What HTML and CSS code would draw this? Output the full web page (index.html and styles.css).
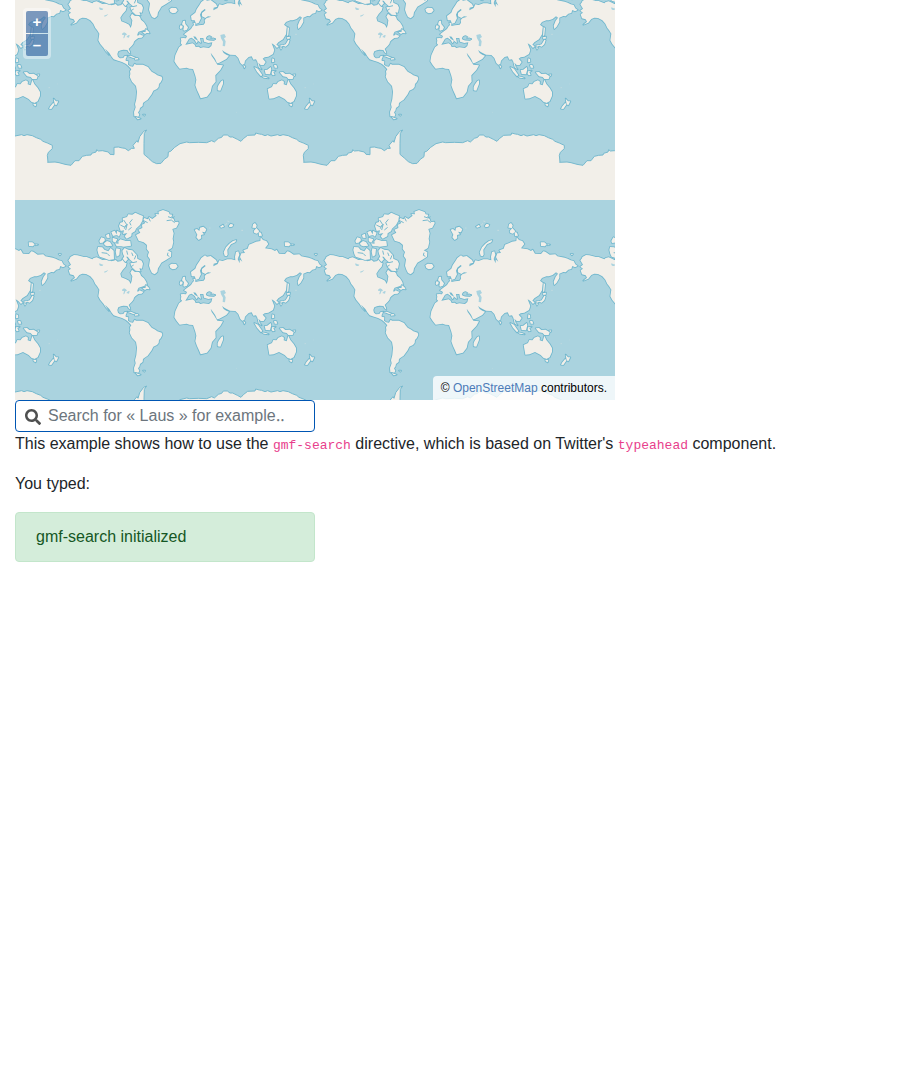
FILE: index.html
```html
<!DOCTYPE html>
<html lang="en">
<head>
<meta charset="utf-8">
<meta name="viewport" content="width=device-width, initial-scale=1">
<title>gmf-search example</title>
<link rel="stylesheet" href="styles.css">
</head>
<body>
<main class="page">
  <section class="map" aria-label="Map">
    <svg class="map-canvas" viewBox="0 -600 1800 1200" preserveAspectRatio="xMinYMin slice" role="img" aria-label="World map">
      <defs>
        <g id="world">
          <g class="land">
            <path d="M160 181L165 175 166 171 177 165 187 166 196 168 207 171 215 171 232 178 236 174 245 172 255 176 262 180 270 179 280 177 290 184 302 180 308 185 319 183 323 176 327 177 330 187 335 190 332 200 323 210 316 221 319 232 332 237 342 242 347 252 350 243 352 229 346 218 351 209 360 216 369 214 375 219 378 227 387 235 394 246 396 254 385 259 371 263 367 271 368 276 374 271 380 274 386 275 380 281 370 282 361 289 357 293 355 300 350 306 341 315 345 323 346 329 341 325 337 318 325 317 318 319 310 322 307 330 309 338 315 343 325 342 329 336 337 335 332 345 332 350 340 352 339 362 346 367 354 368 359 359 363 362 375 362 384 362 399 369 405 377 410 383 421 389 427 394 440 398 442 405 437 415 432 420 431 429 426 435 415 440 410 451 398 467 389 473 384 477 383 486 375 492 373 500 369 505 373 512 370 518 358 517 357 504 362 490 360 481 364 465 366 443 363 426 351 413 344 398 346 390 345 382 349 376 341 367 333 360 321 354 309 350 296 346 290 338 283 327 270 314 276 325 282 333 273 323 266 312 256 300 250 289 253 269 246 258 241 252 235 239 226 229 213 222 202 221 193 225 184 236 169 242 180 233 176 226 165 223 161 211 168 206 160 200 168 194z"/>
            <path d="M363 105L376 98 370 89 382 84 381 74 391 69 384 61 388 54 398 58 402 51 412 57 425 47 421 42 432 43 430 35 444 30 461 36 464 43 472 44 469 51 476 57 479 66 490 65 491 70 484 83 472 87 476 100 473 116 475 126 471 143 466 147 458 151 469 157 468 170 453 180 439 188 433 199 429 205 427 216 419 223 411 219 406 209 402 197 405 178 398 168 402 156 395 147 396 135 386 127 371 122z"/>
            <path d="M312 78L316 68 324 66 323 55 336 51 340 43 352 44 361 38 374 44 384 48 382 62 375 75 363 86 360 94 350 100 349 109 335 116 329 109 337 99 324 102 327 91 317 93z"/>
            <path d="M247 150L249 141 262 142 268 149 280 154 287 144 296 152 297 178 282 180 268 175 254 170 250 162zM302 155L304 145 315 147 313 166 305 170zM322 152L329 144 340 149 352 151 366 166 367 176 380 182 384 191 381 206 373 205 377 214 362 212 350 201 346 190 356 188 345 179 338 170 328 170 324 162zM310 124L316 118 333 123 346 123 348 137 326 140 311 137zM253 123L259 112 268 115 270 121 263 128 255 129zM267 130L276 123 285 126 292 137 277 139 269 136zM273 105L282 101 284 114 275 113zM289 96L299 92 306 105 294 108zM306 92L317 98 312 110 305 104zM293 113L307 118 301 128 293 124zM300 130L311 131 319 138 305 139zM323 176L330 166 339 178 331 186zM463 196L470 191 483 192 488 199 482 206 473 208 466 204zM382 265L392 263 392 255 400 261 404 268 395 267 390 270zM337 336L348 335 362 341 354 342 345 338zM359 343L368 342 371 346 360 347zM362 519L377 524 368 526zM384 512L390 512 388 515z"/>
          </g>
          <g class="inland">
            <path d="M253 190l7 3 5 1-3 4-5 0-4-3zM267 215l6-2 7-3-5 5-6 3zM321 269l6-4 6 3 3 5-5 1-3 8-3 1 2-10-6-1zM334 279l5-5 5-1-2 8z"/>
          </g>
          <g transform="translate(450 0)">
            <g class="land">
              <path d="M47 298L49 290 47 283 55 282 63 283 66 276 57 271 67 263 78 255 83 247 87 243 85 236 91 237 91 246 102 244 116 242 120 236 119 228 125 222 139 218 129 217 121 222 111 217 111 207 122 198 119 195 109 203 105 212 108 223 101 237 93 239 89 229 80 229 78 216 91 206 95 196 103 184 109 174 120 166 126 170 137 168 153 180 157 188 146 191 145 199 158 192 163 181 173 183 187 178 199 178 211 181 210 170 213 156 220 154 223 164 218 177 224 190 224 178 232 185 225 171 229 160 240 159 235 151 248 146 252 134 263 130 273 125 286 123 287 112 294 120 304 123 310 132 300 145 320 148 330 153 335 149 342 161 360 162 367 154 373 155 386 164 403 163 409 169 431 173 440 176 449 181 458 183 463 193 470 198 462 202 454 198 451 207 442 209 434 217 427 216 415 221 415 234 407 248 400 255 398 245 404 230 411 221 405 217 395 225 384 229 376 229 363 234 357 242 366 249 364 269 354 286 340 295 334 302 341 307 336 312 328 303 320 298 322 303 328 318 324 330 310 338 299 340 293 344 302 354 296 363 287 363 280 356 284 368 290 376 281 370 277 353 273 346 265 347 260 337 251 339 240 350 238 360 235 366 226 357 220 342 211 333 195 332 179 324 171 318 176 327 184 332 192 335 184 345 163 356 156 358 150 344 137 326 140 336 147 346 157 362 174 364 166 378 151 394 152 413 141 426 137 444 126 458 107 463 102 451 96 438 91 424 94 407 91 395 88 386 84 375 73 374 65 371 44 374 35 363 28 352 31 334 42 310 51 303 62 302 83 298 89 302 92 309 101 308 106 312 115 310 132 312 139 306 142 295 130 297 117 293 115 282 105 282 108 297 100 291 92 278 85 277 89 284 99 290 95 298 89 288 80 281 72 284 68 291 61 302 52 303z"/>
              <path d="M55 258L57 246 51 241 54 231 60 230 61 240 69 250 66 257 57 260zM44 251L46 244 53 245 52 253 46 255zM89 89L96 87 103 93 105 83 115 80 124 88 120 97 111 95 117 103 108 105 109 115 101 120 94 112 97 104zM165 80L174 74 177 80 168 83zM191 78L197 71 205 74 202 80 194 82zM179 167L176 157 183 142 193 131 204 123 214 120 211 127 198 133 187 149 188 164 185 169zM262 83L264 73 270 69 275 76 273 84zM266 93L274 84 283 94 276 101 268 99zM281 96L288 98 291 107 282 108zM359 127L370 127 377 133 372 139 360 138zM379 133L387 134 381 136zM449 162L456 162 453 166zM368 249L372 252 370 274 366 276zM346 304L355 303 362 301 366 294 370 287 374 289 370 301 362 308 355 305 347 309zM365 280L375 278 374 284 366 284zM345 310L351 311 348 317zM322 343L327 345 328 353 321 355zM327 363L334 363 337 371 329 371zM235 363L241 367 238 373zM268 369L279 374 292 393 288 397 276 383zM291 397L303 399 311 403 296 401zM299 378L307 377 317 369 319 376 315 391 302 390zM321 382L332 380 325 384 329 393 323 394 320 389zM344 385L354 384 361 390 374 389 386 397 383 405 370 405 365 399 354 397zM384 392L391 391 389 396zM308 435L321 429 325 420 334 421 340 413 351 409 357 413 356 421 365 424 370 407 376 420 386 432 393 444 393 456 386 472 376 477 367 473 359 465 342 456 326 463 313 464z"/>
              <path d="M373 479L382 480 380 487 374 484zM434 464L441 472 448 472 442 484 437 481zM433 476L436 482 427 495 420 494 424 487zM161 422L169 411 174 409 174 420 166 440 158 439 158 429z"/>
            </g>
            <path class="lake" d="M124 285L126 278 133 275 140 278 137 283 145 282 153 285 147 289 132 288z"/>
            <path class="inland" d="M166 273L178 270 183 279 177 283 182 292 180 307 173 306 174 293 168 283z"/>
            <path class="specks" d="M187 63l6 2M180 77l5-7M229 91h5M391 271h4M419 431h3M215 505h1M133 84h3M446 420h1"/>
          </g>
          <path class="ice" d="M97 655L120 654 132 656 150 661 168 664 180 650 192 650 202 637 215 634 228 633 230 628 243 624 245 617 250 621 262 620 280 624 285 631 297 632 297 610 310 609 322 612 330 613 340 620 350 613 358 613 354 604 360 597 366 590 369 595 374 578 386 562 395 558 388 568 387 598 387 631 400 642 412 653 425 659 438 658 448 646 459 638 460 624 467 622 479 610 495 599 515 594 524 596 550 595 575 596 590 590 598 594 610 583 620 580 625 573 637 573 645 579 653 579 667 586 678 592 685 584 698 574 720 573 722 567 733 570 740 571 750 575 758 572 768 576 788 572 795 575 804 572 820 575 832 581 845 586 852 592 865 597 880 604 880 614 868 625 865 634 867 655L875 656V768H97z"/>
          <path class="shore" d="M97 655L120 654 132 656 150 661 168 664 180 650 192 650 202 637 215 634 228 633 230 628 243 624 245 617 250 621 262 620 280 624 285 631 297 632 297 610 310 609 322 612 330 613 340 620 350 613 358 613 354 604 360 597 366 590 369 595 374 578 386 562 395 558 388 568 387 598 387 631 400 642 412 653 425 659 438 658 448 646 459 638 460 624 467 622 479 610 495 599 515 594 524 596 550 595 575 596 590 590 598 594 610 583 620 580 625 573 637 573 645 579 653 579 667 586 678 592 685 584 698 574 720 573 722 567 733 570 740 571 750 575 758 572 768 576 788 572 795 575 804 572 820 575 832 581 845 586 852 592 865 597 880 604 880 614 868 625 865 634 867 655"/>
          <path class="shore" d="M316 75l12 6 10-8M326 60l10 15-4 15M340 90l10-8M332 76l-4 10M352 58l-8 10 4 8M459 50l12 4 8-4M455 62l14-2 10 8M384 61l14 7M400 52l6 12M459 158l-2 8 6 3M260 158l16 2 8 8M354 188l12-3M363 166l-5 12M348 200l8-5M335 152l3 12M350 158l4 10"/>
        </g>
        <g id="world-row">
          <use href="#world" x="-768"/>
          <use href="#world"/>
          <use href="#world" x="768"/>
          <use href="#world" x="1536"/>
        </g>
      </defs>
      <use href="#world-row" y="-768"/>
      <use href="#world-row"/>
    </svg>
    <div class="zoom">
      <button class="zoom-button" type="button" title="Zoom in">+</button>
      <button class="zoom-button" type="button" title="Zoom out">–</button>
    </div>
    <div class="attribution">© <a href="#">OpenStreetMap</a> contributors.</div>
  </section>

  <div class="search">
    <svg class="search-icon" viewBox="0 0 512 512" aria-hidden="true"><path d="M505 442.700 405.300 343c-4.500-4.500-10.600-7-17-7H372c27.600-35.300 44-79.700 44-128C416 93.100 322.900 0 208 0S0 93.100 0 208s93.100 208 208 208c48.300 0 92.700-16.400 128-44v16.300c0 6.400 2.500 12.500 7 17l99.700 99.700c9.400 9.400 24.600 9.400 33.900 0l28.300-28.300c9.400-9.400 9.400-24.600.1-34zM208 336c-70.700 0-128-57.200-128-128 0-70.700 57.200-128 128-128 70.700 0 128 57.200 128 128 0 70.700-57.200 128-128 128z"/></svg>
    <input class="search-input" type="text" aria-label="Search" placeholder="Search for « Laus » for example‥">
  </div>

  <p class="text">This example shows how to use the <code>gmf-search</code> directive, which is based on Twitter's <code>typeahead</code> component.</p>
  <p class="text">You typed:</p>
  <div class="alert" role="status">gmf-search initialized</div>
</main>
</body>
</html>
```
FILE: styles.css
```css
*, *::before, *::after {
  box-sizing: border-box;
}

body {
  margin: 0;
  background: #fff;
  color: #212529;
  font-family: "Liberation Sans", Arial, sans-serif;
  font-size: 16px;
  line-height: 24px;
}

.page {
  padding: 0 15px;
}

.map {
  position: relative;
  max-width: 600px;
  background: #aad3df;
}

.map-canvas {
  display: block;
  width: 100%;
  aspect-ratio: 3 / 2;
}

.land {
  fill: #f2efe9;
  stroke: #6fb6cd;
  stroke-width: 5;
  stroke-linejoin: round;
  paint-order: stroke;
}

.ice {
  fill: #f2efe9;
}

.shore {
  fill: none;
  stroke: #76b9ce;
  stroke-width: 3;
  stroke-linejoin: round;
}

.lake {
  fill: #aad3df;
  stroke: #76b9ce;
  stroke-width: 3;
}

.inland {
  fill: #aad3df;
}

.specks {
  fill: none;
  stroke: #c7dde0;
  stroke-width: 3;
}

.zoom {
  position: absolute;
  top: 8px;
  left: 8px;
  padding: 2px;
  border-radius: 4px;
  background: rgba(255, 255, 255, 0.4);
}

.zoom-button {
  display: block;
  width: 22px;
  height: 22px;
  margin: 1px;
  padding: 0;
  border: 0;
  border-radius: 0 0 2px 2px;
  background: rgba(0, 60, 136, 0.5);
  color: #fff;
  font-family: inherit;
  font-size: 15px;
  font-weight: 700;
  line-height: 22px;
  text-align: center;
}

.zoom-button:first-child {
  border-radius: 2px 2px 0 0;
}

.attribution {
  position: absolute;
  right: 0;
  bottom: 0;
  padding: 0 8px;
  border-radius: 4px 0 0;
  background: rgba(255, 255, 255, 0.8);
  color: #000;
  font-size: 12px;
  line-height: 24px;
}

.attribution a {
  color: #4c7bb8;
  text-decoration: none;
}

.search {
  display: flex;
  align-items: center;
  gap: 7px;
  max-width: 300px;
  height: 32px;
  padding: 0 9px;
  border: 1px solid #0056b3;
  border-radius: 4px;
  background: #fff;
}

.search-icon {
  flex: none;
  width: 16px;
  height: 16px;
  margin-top: 2px;
  fill: #4f5050;
}

.search-input {
  flex: 1;
  min-width: 0;
  padding: 0;
  border: 0;
  outline: 0;
  background: transparent;
  color: #495057;
  font: inherit;
}

.search-input::placeholder {
  color: #6c757d;
  opacity: 1;
}

.text {
  margin: 0 0 16px;
}

code {
  color: #e83e8c;
  font-family: "Liberation Mono", monospace;
  font-size: 13px;
  line-height: 16px;
}

.alert {
  max-width: 300px;
  padding: 12px 20px;
  border: 1px solid #c3e6cb;
  border-radius: 4px;
  background: #d4edda;
  color: #155724;
}
```
